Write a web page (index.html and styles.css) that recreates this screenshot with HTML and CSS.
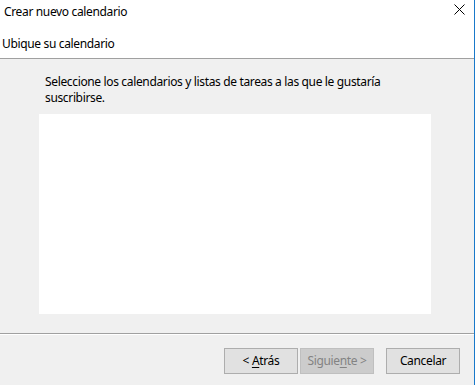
FILE: index.html
```html
<!DOCTYPE html>
<html lang="es">
<head>
<meta charset="utf-8">
<title>Crear nuevo calendario</title>
<link rel="stylesheet" href="styles.css">
</head>
<body>
<div class="window">
  <header class="header">
    <div class="titlebar">
      <span class="title">Crear nuevo calendario</span>
      <button class="close" aria-label="Cerrar">
        <svg width="11" height="11" viewBox="0 0 11 11"><path d="M0.5 0.5 L10.5 10.5 M10.5 0.5 L0.5 10.5" stroke="#000" stroke-width="1" fill="none"/></svg>
      </button>
    </div>
    <div class="subtitle">Ubique su calendario</div>
  </header>
  <main class="content">
    <p class="intro">Seleccione los calendarios y listas de tareas a las que le gustaría suscribirse.</p>
    <div class="list"></div>
  </main>
  <footer class="footer">
    <button class="btn"><span>&lt; <u>A</u>trás</span></button>
    <button class="btn disabled" disabled><span>Siguie<u>n</u>te &gt;</span></button>
    <button class="btn cancel"><span>Cancelar</span></button>
  </footer>
</div>
</body>
</html>
```

FILE: styles.css
```css
html, body {
  margin: 0;
  padding: 0;
  background: #ffffff;
}
body {
  font-family: "Noto Sans", "Open Sans", sans-serif;
  font-size: 12px;
  letter-spacing: -0.35px;
  color: #000;
}
.window {
  width: 474px;
  height: 385px;
  border-right: 1px solid #1979ca;
  background: #f0f0f0;
  display: flex;
  flex-direction: column;
}
.header {
  background: #ffffff;
  height: 58px;
  border-bottom: 1px solid #a0a0a0;
  box-sizing: content-box;
}
.titlebar {
  height: 28px;
  display: flex;
  align-items: center;
  justify-content: space-between;
}
.title {
  padding-left: 4px;
  line-height: 16px;
  margin-top: -5px;
}
.close {
  border: none;
  background: transparent;
  padding: 0;
  margin-right: 9px;
  margin-top: -9px;
  width: 11px;
  height: 11px;
  display: flex;
}
.subtitle {
  padding-left: 2px;
  line-height: 16px;
  margin-top: 8px;
}
.content {
  flex: 1;
  padding: 15px 0 0 0;
  border-bottom: 1px solid #a0a0a0;
  box-shadow: 0 1px 0 #ffffff;
}
.intro {
  margin: 0 0 0 45px;
  width: 350px;
  line-height: 16px;
}
.list {
  margin: 8px 0 0 39px;
  width: 392px;
  height: 200px;
  background: #ffffff;
}
.footer {
  height: 50px;
  display: flex;
  align-items: flex-start;
  padding: 13px 0 0 224px;
  box-sizing: border-box;
  margin-top: 1px;
}
.btn {
  width: 74px;
  height: 26px;
  background: #e1e1e1;
  border: 1px solid #adadad;
  font-family: inherit;
  font-size: 12px;
  letter-spacing: -0.35px;
  color: #000;
  padding: 0;
  margin: 0 2px 0 0;
  line-height: 16px;
}
.btn u {
  text-decoration-thickness: 1px;
  text-underline-offset: 2px;
}
.btn.disabled {
  background: #cccccc;
  border-color: #bfbfbf;
  color: #838383;
}
.btn.cancel {
  margin-left: 10px;
}
```
